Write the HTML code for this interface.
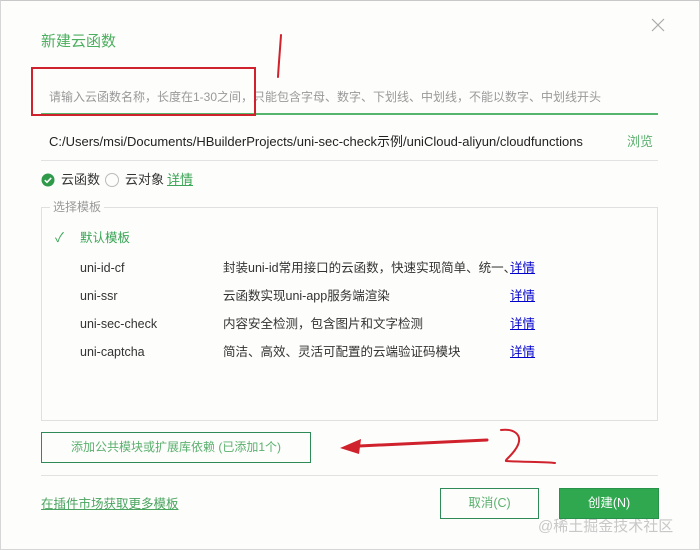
<!DOCTYPE html>
<html><head><meta charset="utf-8"><style>
*{margin:0;padding:0;box-sizing:border-box}
body{width:700px;height:550px;background:#fdfdfb;font-family:"Liberation Sans","Noto Sans CJK SC",sans-serif;position:relative;overflow:hidden;color:#333}
.a{position:absolute;white-space:nowrap;line-height:18px}
.g{color:#3aa556}
</style></head><body>
<div class="a" style="left:0;top:0;width:700px;height:550px;border:1px solid #d6d6d6;border-top-color:#c8c8c8"></div>
<svg class="a" style="left:650px;top:17px" width="16" height="16"><path d="M2 2L14 14M14 2L2 14" stroke="#aaa" stroke-width="1.2"/></svg>
<div class="a g" style="left:41px;top:33px;font-size:15px;color:#4cae5f">新建云函数</div>
<div class="a" style="left:41px;top:113px;width:617px;height:1.5px;background:#55b56d"></div>
<div class="a" style="left:49px;top:88px;font-size:12px;color:#999">请输入云函数名称，长度在1-30之间，只能包含字母、数字、下划线、中划线，不能以数字、中划线开头</div>
<div class="a" style="left:31px;top:67px;width:225px;height:49px;border:2px solid #d0222c"></div>
<svg class="a" style="left:270px;top:30px" width="20" height="52"><path d="M11 5C10 20 9 30 8 47" stroke="#d0222c" stroke-width="2" fill="none" stroke-linecap="round"/></svg>
<div class="a" style="left:49px;top:133px;font-size:13px;color:#222">C:/Users/msi/Documents/HBuilderProjects/uni-sec-check示例/uniCloud-aliyun/cloudfunctions</div>
<div class="a g" style="left:627px;top:133px;font-size:13px;color:#5bb06f">浏览</div>
<div class="a" style="left:41px;top:160px;width:617px;height:1px;background:#e2e2e2"></div>
<svg class="a" style="left:41px;top:173px" width="14" height="14"><circle cx="7" cy="7" r="6.5" fill="#2e9a4a"/><path d="M3.8 7.2L6 9.3L10.2 4.9" stroke="#fff" stroke-width="1.6" fill="none"/></svg>
<div class="a" style="left:61px;top:171px;font-size:13px">云函数</div>
<div class="a" style="left:105px;top:173px;width:14px;height:14px;border:1px solid #bbb;border-radius:50%"></div>
<div class="a" style="left:125px;top:171px;font-size:13px">云对象</div>
<div class="a g" style="left:167px;top:171px;font-size:13px;text-decoration:underline">详情</div>
<div class="a" style="left:41px;top:207px;width:617px;height:214px;border:1px solid #e0e0e0"></div>
<div class="a" style="left:50px;top:198px;font-size:12px;color:#999;background:#fdfdfb;padding:0 3px">选择模板</div>
<div class="a g" style="left:55px;top:229px;font-size:13px">✓</div>
<div class="a g" style="left:80px;top:229px;font-size:12.5px">默认模板</div>
<div class="a" style="left:80px;top:257px;font-size:12.5px;line-height:22px">uni-id-cf</div>
<div class="a" style="left:223px;top:257px;font-size:12.5px;line-height:22px">封装uni-id常用接口的云函数，快速实现简单、统一、</div>
<div class="a" style="left:80px;top:285px;font-size:12.5px;line-height:22px">uni-ssr</div>
<div class="a" style="left:223px;top:285px;font-size:12.5px;line-height:22px">云函数实现uni-app服务端渲染</div>
<div class="a" style="left:80px;top:313px;font-size:12.5px;line-height:22px">uni-sec-check</div>
<div class="a" style="left:223px;top:313px;font-size:12.5px;line-height:22px">内容安全检测，包含图片和文字检测</div>
<div class="a" style="left:80px;top:341px;font-size:12.5px;line-height:22px">uni-captcha</div>
<div class="a" style="left:223px;top:341px;font-size:12.5px;line-height:22px">简洁、高效、灵活可配置的云端验证码模块</div>
<div class="a" style="left:510px;top:257px;font-size:12.5px;line-height:22px;color:#00c;text-decoration:underline;background:#fdfdfb">详情</div>
<div class="a" style="left:510px;top:285px;font-size:12.5px;line-height:22px;color:#00c;text-decoration:underline">详情</div>
<div class="a" style="left:510px;top:313px;font-size:12.5px;line-height:22px;color:#00c;text-decoration:underline">详情</div>
<div class="a" style="left:510px;top:341px;font-size:12.5px;line-height:22px;color:#00c;text-decoration:underline">详情</div>
<div class="a" style="left:41px;top:432px;width:270px;height:31px;border:1px solid #2e8b57;font-size:12px;color:#5bb06f;text-align:center;line-height:29px">添加公共模块或扩展库依赖 (已添加1个)</div>
<svg class="a" style="left:315px;top:420px" width="250" height="50"><path d="M44 26L172 20" stroke="#d0222c" stroke-width="3" fill="none" stroke-linecap="round"/><path d="M25 28L46 19L44 34Z" fill="#d0222c"/><path d="M186 10C200 8 210 16 200 30C195 37 190 40 191 41C210 42 230 42 240 43" stroke="#d0222c" stroke-width="2" fill="none" stroke-linecap="round"/></svg>
<div class="a" style="left:41px;top:475px;width:617px;height:1px;background:#e2e2e2"></div>
<div class="a g" style="left:41px;top:495px;font-size:12.5px;text-decoration:underline;color:#4aa460">在插件市场获取更多模板</div>
<div class="a" style="left:538px;top:518px;font-size:15px;color:#c8c8c8">@稀土掘金技术社区</div>
<div class="a" style="left:440px;top:488px;width:99px;height:31px;border:1px solid #2e8b57;font-size:12.5px;color:#5bb06f;text-align:center;line-height:29px;background:#fdfdfb">取消(C)</div>
<div class="a" style="left:559px;top:488px;width:100px;height:31px;background:#2fa84f;border:1px solid #28914a;font-size:12.5px;color:#fff;text-align:center;line-height:29px">创建(N)</div>
</body></html>
